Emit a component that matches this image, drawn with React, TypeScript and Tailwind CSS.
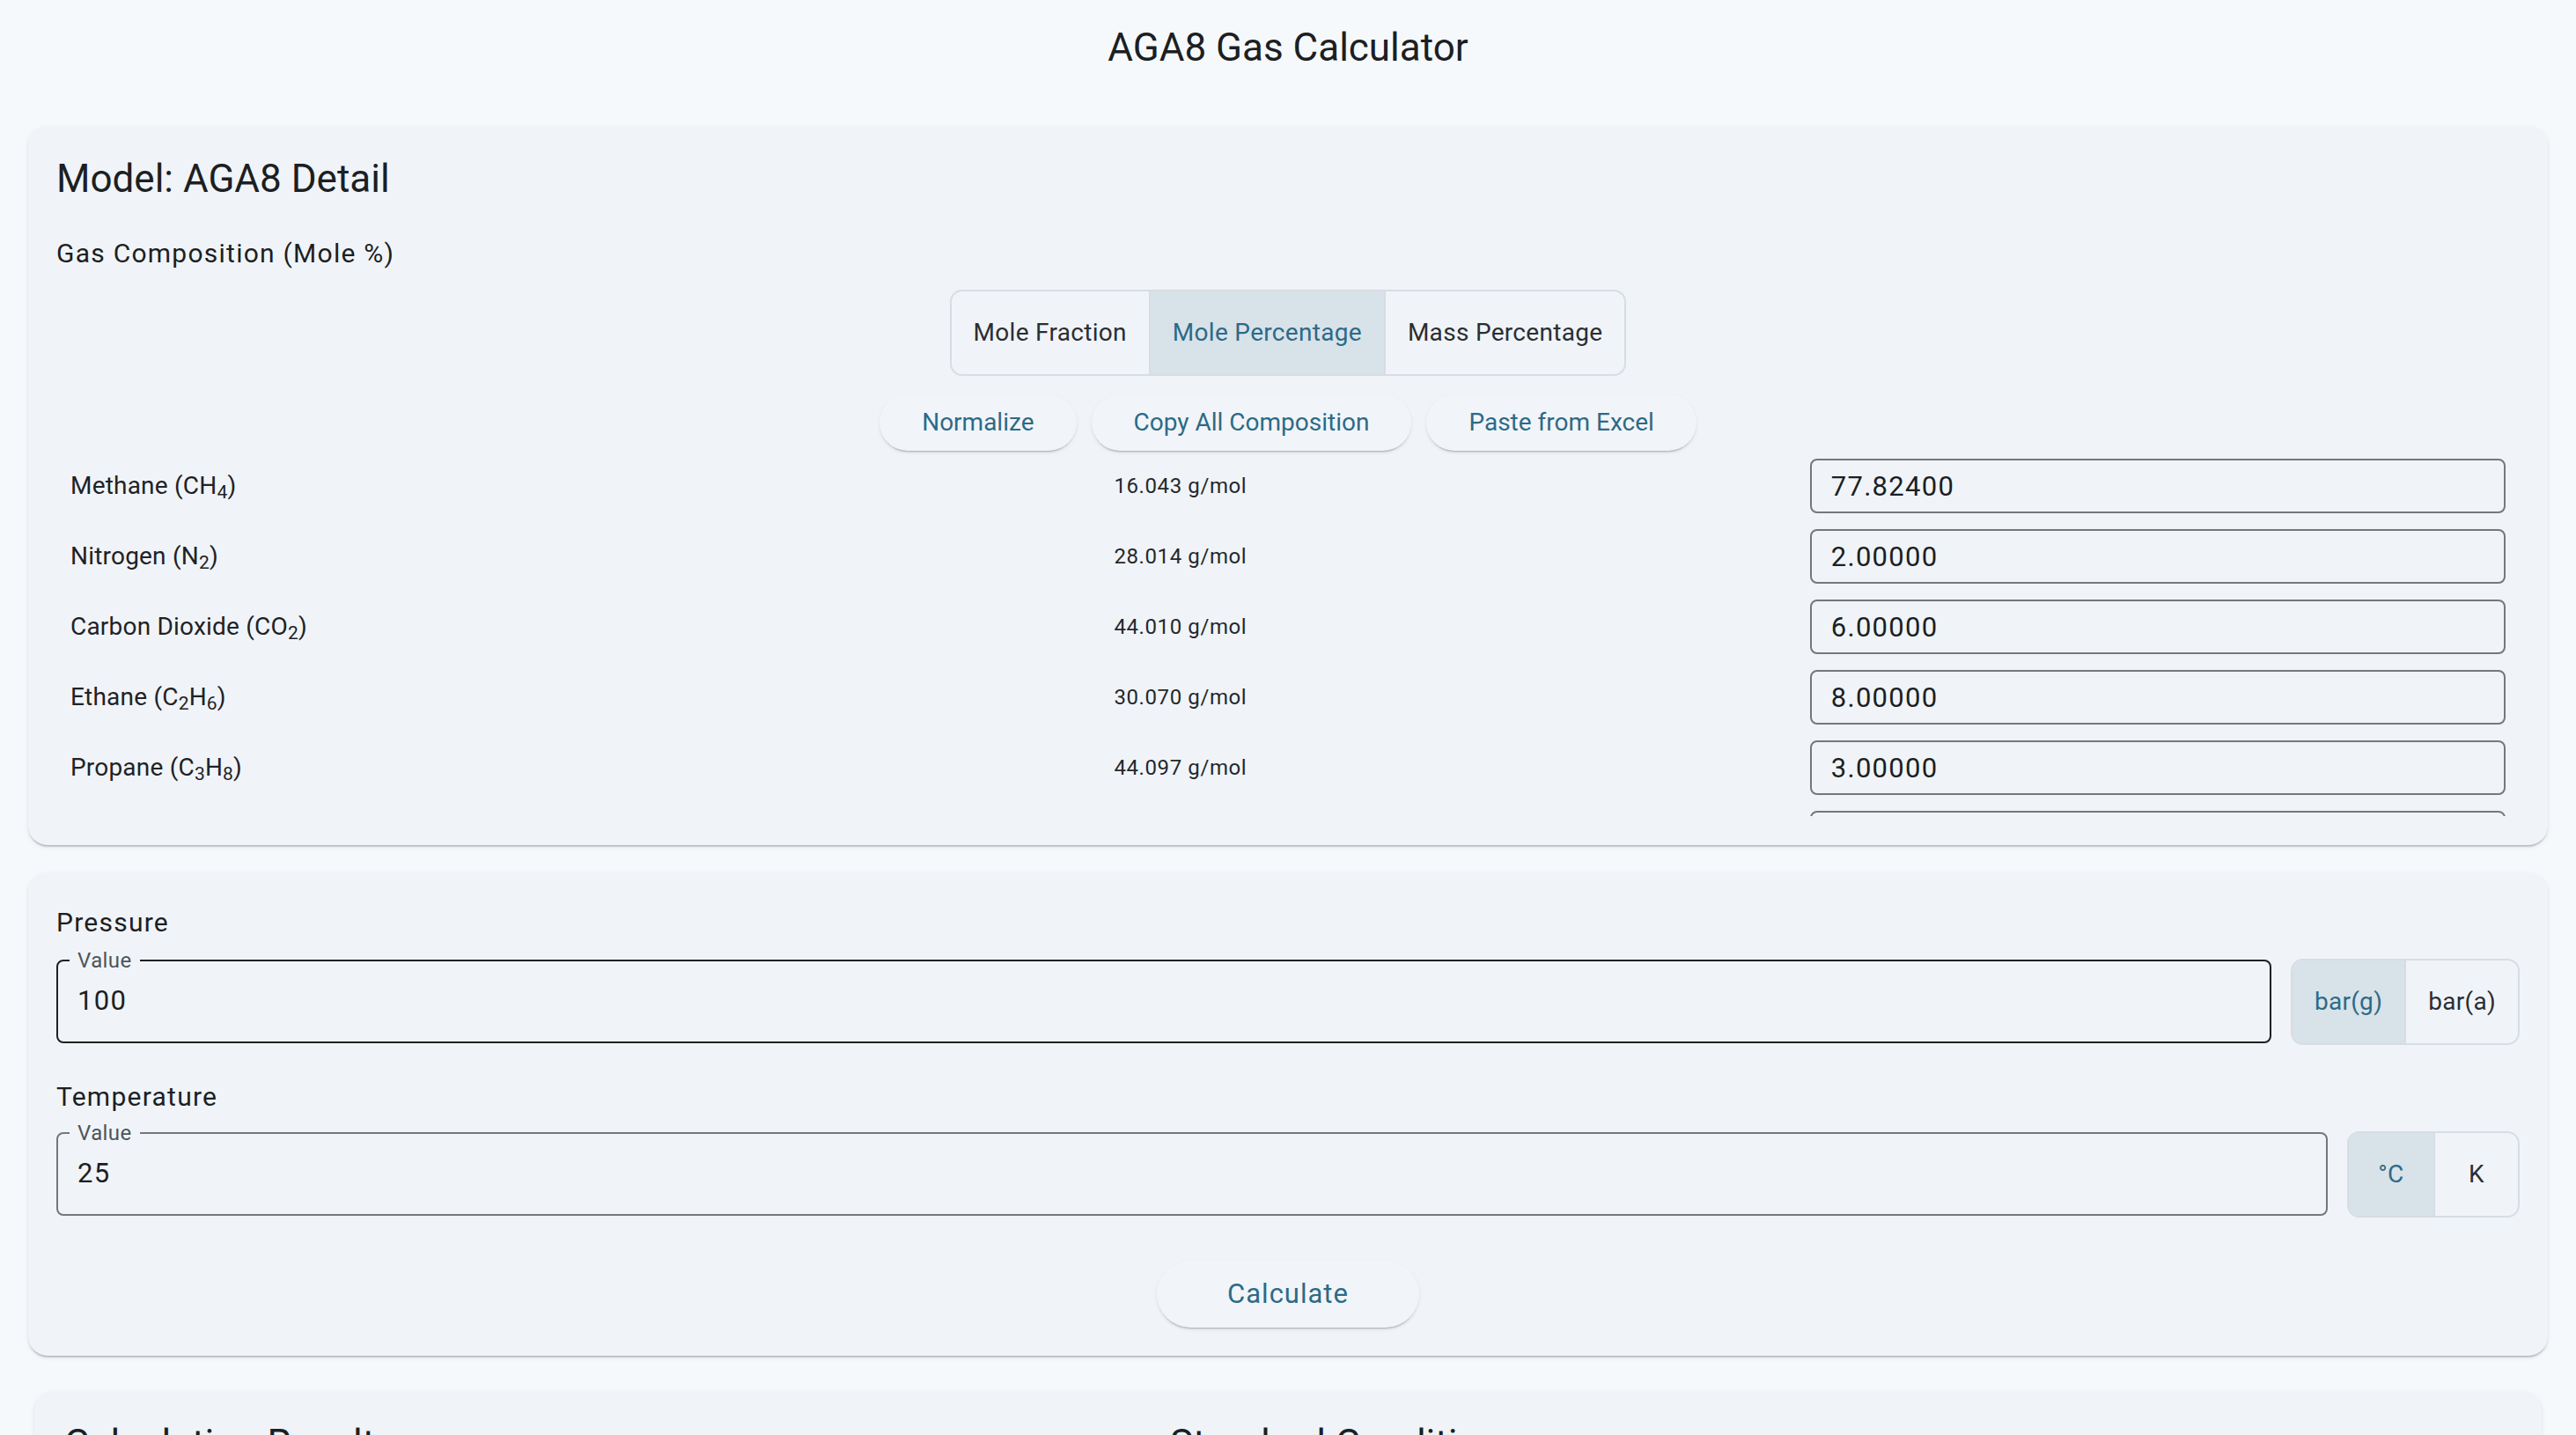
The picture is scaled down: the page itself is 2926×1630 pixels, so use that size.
import React from "react";

type Component = { name: string; formula: string; mw: string; value: string };

const components: Component[] = [
  { name: "Methane", formula: "CH4", mw: "16.043", value: "77.82400" },
  { name: "Nitrogen", formula: "N2", mw: "28.014", value: "2.00000" },
  { name: "Carbon Dioxide", formula: "CO2", mw: "44.010", value: "6.00000" },
  { name: "Ethane", formula: "C2H6", mw: "30.070", value: "8.00000" },
  { name: "Propane", formula: "C3H8", mw: "44.097", value: "3.00000" },
  { name: "Isobutane", formula: "C4H10", mw: "58.123", value: "1.00000" },
  { name: "n-Butane", formula: "C4H10", mw: "58.123", value: "1.50000" },
];

function Formula({ f }: { f: string }) {
  return (
    <>
      {f.split(/(\d+)/).map((part, i) =>
        /^\d+$/.test(part) ? <sub key={i}>{part}</sub> : <span key={i}>{part}</span>
      )}
    </>
  );
}

function Segments({ items, active, minW = false }: { items: string[]; active: number; minW?: boolean }) {
  return (
    <div className="inline-flex h-[98px] shrink-0 overflow-hidden rounded-[14px] border-2 border-[#d7dde2]">
      {items.map((label, i) => (
        <div
          key={label}
          className={
            "flex items-center justify-center px-[25px] text-[28px] tracking-[0.3px] " +
            (minW ? "min-w-[96px] " : "") +
            (i > 0 ? "border-l-2 border-[#d7dde2] " : "") +
            (i === active ? "bg-[#d8e2e9] text-[#2d6a87]" : "text-[#2b2e32]")
          }
        >
          {label}
        </div>
      ))}
    </div>
  );
}

function PillButton({ children, big = false }: { children: React.ReactNode; big?: boolean }) {
  return (
    <button
      className={
        "rounded-full bg-[#f1f5f9] text-[#2d6a87] shadow-[0_3px_2px_-2px_rgba(0,0,0,0.25),0_2px_4px_0_rgba(0,0,0,0.08)] " +
        (big ? "h-[76px] px-[80px] text-[31px] tracking-[1px]" : "h-[64px] px-[48px] text-[28px]")
      }
    >
      {children}
    </button>
  );
}

function ValueField({ value, dark }: { value: string; dark?: boolean }) {
  return (
    <fieldset
      className={
        "min-w-0 flex-1 rounded-[8px] border-2 pl-[22px] pr-[22px] pb-[14px] " +
        (dark ? "border-[#1d2125]" : "border-[#74787d]")
      }
    >
      <legend className="ml-[-9px] px-[9px] text-[24px] leading-[28px] tracking-[0.4px] text-[#4f5459]">Value</legend>
      <div className="flex h-[64px] items-center text-[31px] tracking-[1.3px] text-[#1c1f23]">{value}</div>
    </fieldset>
  );
}

const card =
  "rounded-[22px] bg-[#f0f4f8] shadow-[0_3px_2px_-2px_rgba(0,0,0,0.2),0_2px_2px_0_rgba(0,0,0,0.1),0_2px_6px_0_rgba(0,0,0,0.06)]";

export default function App() {
  return (
    <div className="min-h-screen bg-[#f6f9fc] pb-[60px] font-['Roboto',sans-serif] text-[#1c1f23]">
      <h1 className="pt-[27px] text-center text-[44px] font-normal leading-[54px]">AGA8 Gas Calculator</h1>

      <div className="mt-[62px] flex flex-col px-[32px]">
        <section className={card + " px-[32px] pt-[34px] pb-[33px]"}>
          <h2 className="text-[44px] leading-[52px]">Model: AGA8 Detail</h2>
          <p className="mt-[36px] text-[30px] leading-[45px] tracking-[1.25px]">Gas Composition (Mole %)</p>

          <div className="mt-[19px] flex justify-center">
            <Segments items={["Mole Fraction", "Mole Percentage", "Mass Percentage"]} active={1} />
          </div>

          <div className="mt-[21px] flex justify-center gap-[17px]">
            <PillButton>Normalize</PillButton>
            <PillButton>Copy All Composition</PillButton>
            <PillButton>Paste from Excel</PillButton>
          </div>

          <div className="h-[415px] overflow-hidden">
            {components.map((c) => (
              <div key={c.name} className="grid h-[80px] grid-cols-[3fr_2fr_2fr] items-center px-[16px]">
                <div className="text-[28px] tracking-[0.2px] text-[#1f2226]">
                  {c.name} (<Formula f={c.formula} />)
                </div>
                <div className="text-[24px] tracking-[0.6px] text-[#25282c]">{c.mw} g/mol</div>
                <input
                  readOnly
                  value={c.value}
                  className="h-[62px] w-full rounded-[8px] border-2 border-[#74787d] bg-transparent px-[22px] text-[31px] tracking-[1.3px] text-[#1c1f23] outline-none"
                />
              </div>
            ))}
          </div>
        </section>

        <section className={card + " mt-[31px] px-[32px] pt-[34px] pb-[32px]"}>
          <p className="text-[30px] leading-[45px] tracking-[1.25px]">Pressure</p>
          <div className="mt-[7px] flex items-start gap-[22px]">
            <ValueField value="100" dark />
            <div className="mt-[12px]">
              <Segments items={["bar(g)", "bar(a)"]} active={0} />
            </div>
          </div>

          <p className="mt-[36px] text-[30px] leading-[45px] tracking-[1.25px]">Temperature</p>
          <div className="mt-[5px] flex items-start gap-[22px]">
            <ValueField value="25" />
            <div className="mt-[12px]">
              <Segments items={["°C", "K"]} active={0} minW />
            </div>
          </div>

          <div className="mt-[49px] flex justify-center">
            <PillButton big>Calculate</PillButton>
          </div>
        </section>

        <section className={card + " mx-[7px] mt-[40px] px-[34px] pt-[34px] pb-[40px]"}>
          <div className="grid grid-cols-[1256px_1fr]">
            <div>
              <h3 className="text-[44px] leading-[52px]">Calculation Results</h3>
              <p className="mt-[24px] text-[28px] text-[#4f5459]">Press Calculate to see results.</p>
            </div>
            <div>
              <h3 className="text-[44px] leading-[52px]">Standard Conditions</h3>
              <p className="mt-[24px] text-[28px] text-[#4f5459]">15 °C, 1.01325 bar(a)</p>
            </div>
          </div>
        </section>
      </div>
    </div>
  );
}
